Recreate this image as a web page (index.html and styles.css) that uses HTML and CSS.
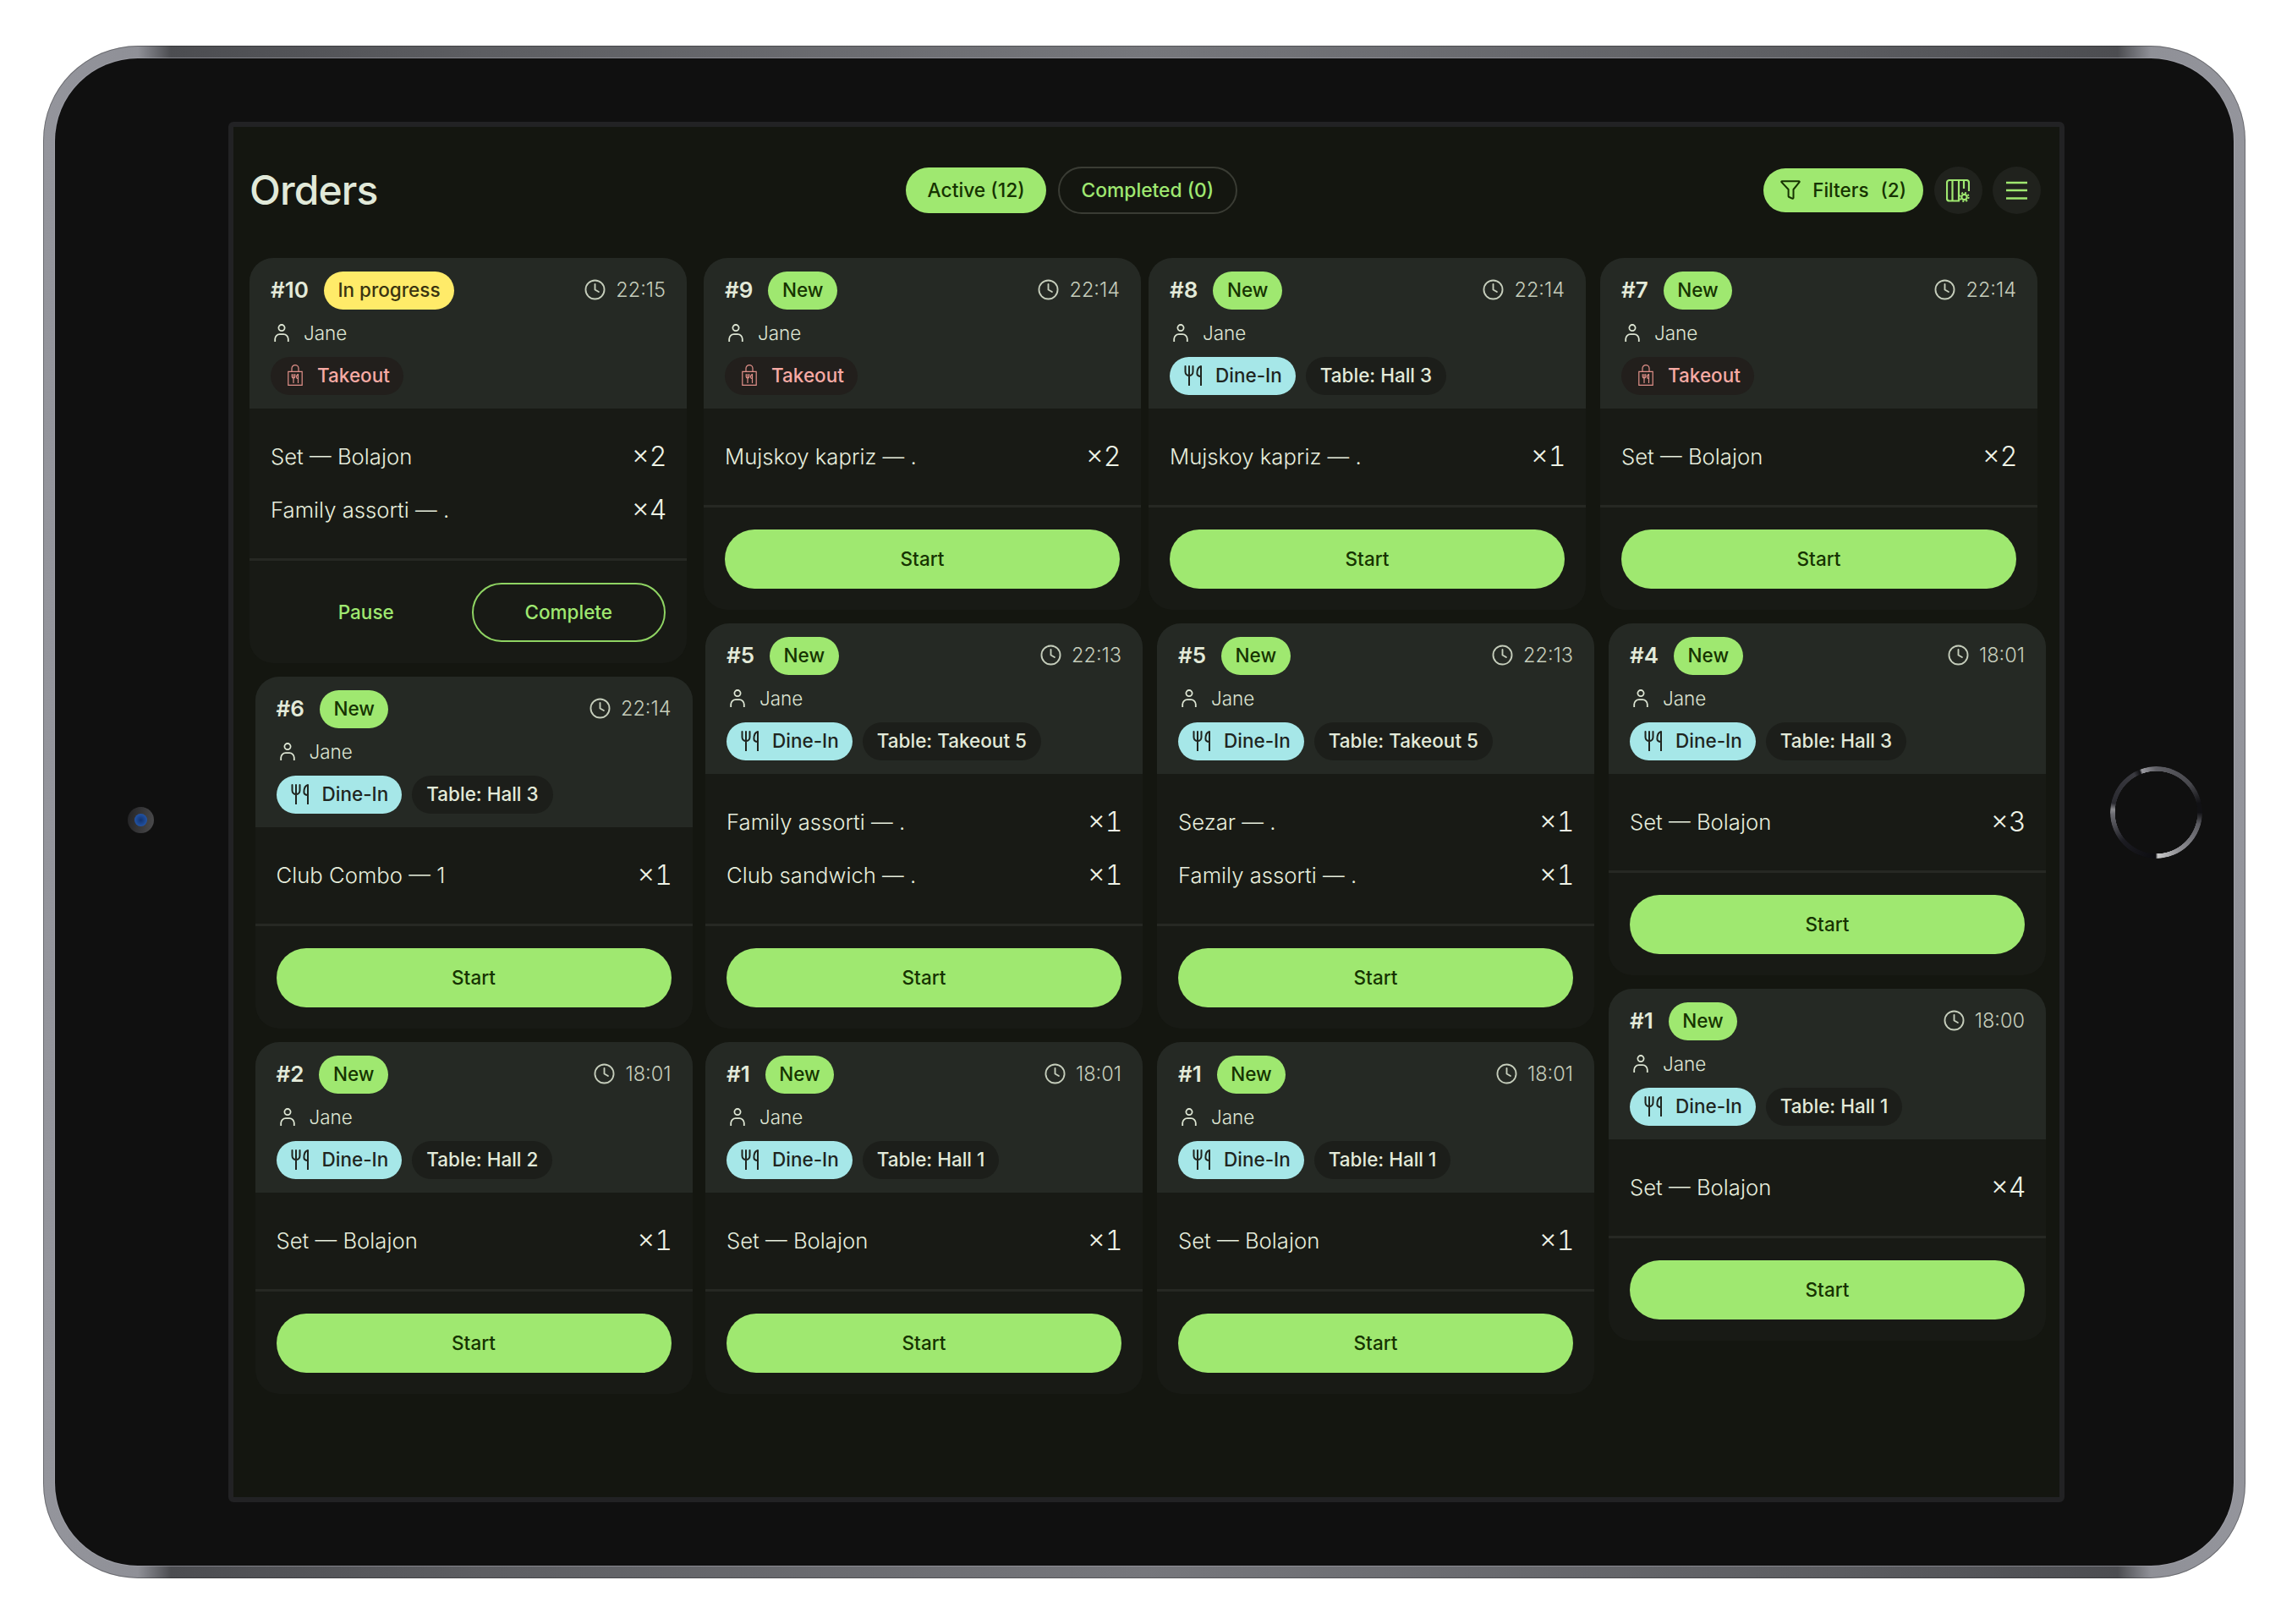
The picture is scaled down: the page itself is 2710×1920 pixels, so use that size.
FILE: index.html
```html
<!DOCTYPE html>
<html lang="en">
<head>
<meta charset="utf-8">
<title>Orders</title>
<link rel="stylesheet" href="styles.css">
</head>
<body>
<svg class="defs" width="0" height="0" aria-hidden="true">
  <symbol id="i-clock" viewBox="0 0 24 24"><circle cx="12" cy="12" r="10.6" fill="none" stroke="currentColor" stroke-width="1.8"/><path d="M12 5.8V12l4.2 2.4" fill="none" stroke="currentColor" stroke-width="1.8" stroke-linecap="round" stroke-linejoin="round"/></symbol>
  <symbol id="i-user" viewBox="0 0 18 21"><circle cx="9" cy="4.6" r="3.6" fill="none" stroke="currentColor" stroke-width="1.8"/><path d="M1.2 21v-3.2a5.6 5.6 0 0 1 5.6-5.6h4.4a5.6 5.6 0 0 1 5.6 5.6V21" fill="none" stroke="currentColor" stroke-width="1.8"/></symbol>
  <symbol id="i-dine" viewBox="0 0 22 24"><path d="M1.500 1v6.500a4.500 4.500 0 0 0 9 0V1M6 1v22.500M20 23.500V1c-3 .8-4.600 4.600-4.600 8.600 0 2.400 1.600 3.400 4.600 3.400" fill="none" stroke="currentColor" stroke-width="2" stroke-linecap="round" stroke-linejoin="round"/></symbol>
  <symbol id="i-bag" viewBox="0 0 18 25"><path d="M.8 8.300h16.400v16H.8zM5 8.300V4.600a4 4 0 0 1 8 0v3.700" fill="none" stroke="currentColor" stroke-width="1.200"/><path d="M5.200 11.500v2.800a1.800 1.800 0 0 0 3.600 0v-2.800M7 11.500v10M12.500 21.500v-10c-1.400.4-2 2-2 3.600 0 1 .7 1.500 2 1.500" fill="none" stroke="currentColor" stroke-width="1.200" stroke-linecap="round"/></symbol>
  <symbol id="i-funnel" viewBox="0 0 24 23"><path d="M2 1.200h20a.7.700 0 0 1 .5 1.200L15.500 11v9.700c0 .8-.8 1.300-1.500 1l-3.500-1.700a1 1 0 0 1-.9-.9V11L1.500 2.400A.7.700 0 0 1 2 1.200z" fill="none" stroke="currentColor" stroke-width="2" stroke-linejoin="round"/></symbol>
  <symbol id="i-cols" viewBox="0 0 28 27"><path d="M16 25.500H4a3 3 0 0 1-3-3V4a3 3 0 0 1 3-3h20a3 3 0 0 1 3 3v10" fill="none" stroke="currentColor" stroke-width="2.200"/><path d="M7.500 1v24.500M15 1v24.500M21 1v10" fill="none" stroke="currentColor" stroke-width="2.200"/><circle cx="21.500" cy="21" r="3.200" fill="none" stroke="currentColor" stroke-width="2.200"/><circle cx="21.500" cy="21" r="5.200" fill="none" stroke="currentColor" stroke-width="1.800" stroke-dasharray="2.100 1.970"/></symbol>
  <symbol id="i-menu" viewBox="0 0 25 22"><path d="M0 2h25M0 11h25M0 20.500h25" fill="none" stroke="currentColor" stroke-width="2.600"/></symbol>
</svg>

<div class="device">
  <span class="camera"><span class="lens"></span></span>
  <span class="home"></span>
  <div class="bezel">
    <main class="screen">
      <header class="topbar">
        <h1 class="title">Orders</h1>
        <nav class="tabs">
          <span class="tab tab-on">Active (12)</span>
          <span class="tab tab-off">Completed (0)</span>
        </nav>
        <div class="tools">
          <span class="filters"><svg class="ic-funnel"><use href="#i-funnel"/></svg><span>Filters</span><span>(2)</span></span>
          <span class="round"><svg class="ic-cols"><use href="#i-cols"/></svg></span>
          <span class="round"><svg class="ic-menu"><use href="#i-menu"/></svg></span>
        </div>
      </header>

      <section class="board">
        <div class="col col-a">
          <article class="card">
            <div class="head">
              <div class="line1"><b class="num">#10</b><span class="pill st-prog">In progress</span><span class="time"><svg class="ic-clock"><use href="#i-clock"/></svg>22:15</span></div>
              <div class="who"><svg class="ic-user"><use href="#i-user"/></svg>Jane</div>
              <div class="tags"><span class="pill tk"><svg class="ic-bag"><use href="#i-bag"/></svg>Takeout</span></div>
            </div>
            <ul class="items">
              <li><span>Set — Bolajon</span><span class="qty">×2</span></li>
              <li><span>Family assorti — .</span><span class="qty">×4</span></li>
            </ul>
            <div class="foot two"><span class="btn ghost">Pause</span><span class="btn outline">Complete</span></div>
          </article>
          <article class="card lower">
            <div class="head">
              <div class="line1"><b class="num">#6</b><span class="pill st-new">New</span><span class="time"><svg class="ic-clock"><use href="#i-clock"/></svg>22:14</span></div>
              <div class="who"><svg class="ic-user"><use href="#i-user"/></svg>Jane</div>
              <div class="tags"><span class="pill dine"><svg class="ic-dine"><use href="#i-dine"/></svg>Dine-In</span><span class="pill tbl">Table: Hall 3</span></div>
            </div>
            <ul class="items"><li><span>Club Combo — 1</span><span class="qty">×1</span></li></ul>
            <div class="foot"><span class="btn solid">Start</span></div>
          </article>
          <article class="card lower">
            <div class="head">
              <div class="line1"><b class="num">#2</b><span class="pill st-new">New</span><span class="time"><svg class="ic-clock"><use href="#i-clock"/></svg>18:01</span></div>
              <div class="who"><svg class="ic-user"><use href="#i-user"/></svg>Jane</div>
              <div class="tags"><span class="pill dine"><svg class="ic-dine"><use href="#i-dine"/></svg>Dine-In</span><span class="pill tbl">Table: Hall 2</span></div>
            </div>
            <ul class="items"><li><span>Set — Bolajon</span><span class="qty">×1</span></li></ul>
            <div class="foot"><span class="btn solid">Start</span></div>
          </article>
        </div>

        <div class="col col-b">
          <article class="card">
            <div class="head">
              <div class="line1"><b class="num">#9</b><span class="pill st-new">New</span><span class="time"><svg class="ic-clock"><use href="#i-clock"/></svg>22:14</span></div>
              <div class="who"><svg class="ic-user"><use href="#i-user"/></svg>Jane</div>
              <div class="tags"><span class="pill tk"><svg class="ic-bag"><use href="#i-bag"/></svg>Takeout</span></div>
            </div>
            <ul class="items"><li><span>Mujskoy kapriz — .</span><span class="qty">×2</span></li></ul>
            <div class="foot"><span class="btn solid">Start</span></div>
          </article>
          <article class="card lower">
            <div class="head">
              <div class="line1"><b class="num">#5</b><span class="pill st-new">New</span><span class="time"><svg class="ic-clock"><use href="#i-clock"/></svg>22:13</span></div>
              <div class="who"><svg class="ic-user"><use href="#i-user"/></svg>Jane</div>
              <div class="tags"><span class="pill dine"><svg class="ic-dine"><use href="#i-dine"/></svg>Dine-In</span><span class="pill tbl">Table: Takeout 5</span></div>
            </div>
            <ul class="items">
              <li><span>Family assorti — .</span><span class="qty">×1</span></li>
              <li><span>Club sandwich — .</span><span class="qty">×1</span></li>
            </ul>
            <div class="foot"><span class="btn solid">Start</span></div>
          </article>
          <article class="card lower">
            <div class="head">
              <div class="line1"><b class="num">#1</b><span class="pill st-new">New</span><span class="time"><svg class="ic-clock"><use href="#i-clock"/></svg>18:01</span></div>
              <div class="who"><svg class="ic-user"><use href="#i-user"/></svg>Jane</div>
              <div class="tags"><span class="pill dine"><svg class="ic-dine"><use href="#i-dine"/></svg>Dine-In</span><span class="pill tbl">Table: Hall 1</span></div>
            </div>
            <ul class="items"><li><span>Set — Bolajon</span><span class="qty">×1</span></li></ul>
            <div class="foot"><span class="btn solid">Start</span></div>
          </article>
        </div>

        <div class="col col-c">
          <article class="card">
            <div class="head">
              <div class="line1"><b class="num">#8</b><span class="pill st-new">New</span><span class="time"><svg class="ic-clock"><use href="#i-clock"/></svg>22:14</span></div>
              <div class="who"><svg class="ic-user"><use href="#i-user"/></svg>Jane</div>
              <div class="tags"><span class="pill dine"><svg class="ic-dine"><use href="#i-dine"/></svg>Dine-In</span><span class="pill tbl">Table: Hall 3</span></div>
            </div>
            <ul class="items"><li><span>Mujskoy kapriz — .</span><span class="qty">×1</span></li></ul>
            <div class="foot"><span class="btn solid">Start</span></div>
          </article>
          <article class="card lower">
            <div class="head">
              <div class="line1"><b class="num">#5</b><span class="pill st-new">New</span><span class="time"><svg class="ic-clock"><use href="#i-clock"/></svg>22:13</span></div>
              <div class="who"><svg class="ic-user"><use href="#i-user"/></svg>Jane</div>
              <div class="tags"><span class="pill dine"><svg class="ic-dine"><use href="#i-dine"/></svg>Dine-In</span><span class="pill tbl">Table: Takeout 5</span></div>
            </div>
            <ul class="items">
              <li><span>Sezar — .</span><span class="qty">×1</span></li>
              <li><span>Family assorti — .</span><span class="qty">×1</span></li>
            </ul>
            <div class="foot"><span class="btn solid">Start</span></div>
          </article>
          <article class="card lower">
            <div class="head">
              <div class="line1"><b class="num">#1</b><span class="pill st-new">New</span><span class="time"><svg class="ic-clock"><use href="#i-clock"/></svg>18:01</span></div>
              <div class="who"><svg class="ic-user"><use href="#i-user"/></svg>Jane</div>
              <div class="tags"><span class="pill dine"><svg class="ic-dine"><use href="#i-dine"/></svg>Dine-In</span><span class="pill tbl">Table: Hall 1</span></div>
            </div>
            <ul class="items"><li><span>Set — Bolajon</span><span class="qty">×1</span></li></ul>
            <div class="foot"><span class="btn solid">Start</span></div>
          </article>
        </div>

        <div class="col col-d">
          <article class="card">
            <div class="head">
              <div class="line1"><b class="num">#7</b><span class="pill st-new">New</span><span class="time"><svg class="ic-clock"><use href="#i-clock"/></svg>22:14</span></div>
              <div class="who"><svg class="ic-user"><use href="#i-user"/></svg>Jane</div>
              <div class="tags"><span class="pill tk"><svg class="ic-bag"><use href="#i-bag"/></svg>Takeout</span></div>
            </div>
            <ul class="items"><li><span>Set — Bolajon</span><span class="qty">×2</span></li></ul>
            <div class="foot"><span class="btn solid">Start</span></div>
          </article>
          <article class="card lower">
            <div class="head">
              <div class="line1"><b class="num">#4</b><span class="pill st-new">New</span><span class="time"><svg class="ic-clock"><use href="#i-clock"/></svg>18:01</span></div>
              <div class="who"><svg class="ic-user"><use href="#i-user"/></svg>Jane</div>
              <div class="tags"><span class="pill dine"><svg class="ic-dine"><use href="#i-dine"/></svg>Dine-In</span><span class="pill tbl">Table: Hall 3</span></div>
            </div>
            <ul class="items"><li><span>Set — Bolajon</span><span class="qty">×3</span></li></ul>
            <div class="foot"><span class="btn solid">Start</span></div>
          </article>
          <article class="card lower">
            <div class="head">
              <div class="line1"><b class="num">#1</b><span class="pill st-new">New</span><span class="time"><svg class="ic-clock"><use href="#i-clock"/></svg>18:00</span></div>
              <div class="who"><svg class="ic-user"><use href="#i-user"/></svg>Jane</div>
              <div class="tags"><span class="pill dine"><svg class="ic-dine"><use href="#i-dine"/></svg>Dine-In</span><span class="pill tbl">Table: Hall 1</span></div>
            </div>
            <ul class="items"><li><span>Set — Bolajon</span><span class="qty">×4</span></li></ul>
            <div class="foot"><span class="btn solid">Start</span></div>
          </article>
        </div>
      </section>
    </main>
  </div>
</div>
</body>
</html>
```

FILE: styles.css
```css
* { box-sizing: border-box; }
html, body { margin: 0; padding: 0; }
body {
  width: 2710px;
  height: 1920px;
  background: #fff;
  padding: 54px 55px 54px 51px;
  font-family: Inter, "Liberation Sans", sans-serif;
  overflow: hidden;
}
.defs { position: absolute; }

/* tablet hardware */
.device {
  position: relative;
  height: 1812px;
  padding: 15px 14px 15px 14px;
  border-radius: 112px;
  background: linear-gradient(90deg, #94959c 0, #8f9097 4.3%, #4c4d51 5.8%, #5d5e62 20%, #76777c 50%, #5d5e62 80%, #4c4d51 94.2%, #8f9097 95.7%, #94959c 100%);
  box-shadow: inset 0 0 0 1px rgba(0,0,0,.28);
}
.bezel {
  height: 100%;
  border-radius: 98px;
  background: #101010;
  box-shadow: 0 0 0 1px rgba(170,170,178,.55);
  padding: 75px 200px 75px 205px;
}
.camera {
  position: absolute;
  left: 100px;
  top: 900px;
  width: 31px;
  height: 31px;
  border-radius: 50%;
  background: linear-gradient(100deg, #222224, #4c4c4e);
  display: flex;
  align-items: center;
  justify-content: center;
}
.lens {
  width: 15px;
  height: 15px;
  border-radius: 50%;
  background: radial-gradient(circle, #12326e 0, #2458ac 80%);
}
.home {
  position: absolute;
  left: 2444px;
  top: 852px;
  width: 109px;
  height: 109px;
  border-radius: 50%;
  background: conic-gradient(from 0deg,
    #5e5e64 0deg, #47474c 50deg, #111114 78deg, #111114 90deg, #5a5a60 105deg, #8f8f94 150deg, #c8c8c8 178deg,
    #0c0c10 181deg, #1c1c22 230deg, #6c6c72 268deg, #8a8a8e 274deg, #2a2a30 282deg, #3a3a40 330deg, #111114 338deg, #9a9aa0 341deg, #5e5e64 360deg);
  -webkit-mask: radial-gradient(circle, transparent 48.5px, #000 49px);
  mask: radial-gradient(circle, transparent 48.5px, #000 49px);
}

/* app */
.screen {
  height: 100%;
  border: 6px solid #222224;
  border-radius: 6px;
  background: #141610;
  padding: 0 22px 0 19px;
}
.topbar {
  height: 150px;
  margin-bottom: 5px;
  display: grid;
  grid-template-columns: 775px auto 1fr;
  align-items: center;
}
.title {
  margin: 0;
  font-size: 48px;
  line-height: 56px;
  font-weight: 500;
  letter-spacing: -.9px;
  color: #e1e9d9;
}
.tabs { display: flex; align-items: center; gap: 14px; margin-left: 1px; }
.tab {
  display: flex;
  align-items: center;
  border-radius: 28px;
  font-size: 22.8px;
  font-weight: 500;
}
.tab-on { height: 54px; padding: 0 25.5px 1px; background: #9fe870; color: #163300; }
.tab-off { height: 56px; padding: 0 25.5px 1px; border: 2px solid #3a3c34; color: #9fe870; }
.tools { display: flex; align-items: center; justify-content: flex-end; gap: 12.5px; }
.filters {
  height: 52px;
  padding: 0 20px 1px;
  border-radius: 26px;
  background: #9fe870;
  color: #163300;
  display: flex;
  align-items: center;
  gap: 14px;
  font-size: 22.5px;
  font-weight: 500;
}
.ic-funnel { width: 24px; height: 23px; }
.round {
  width: 57px;
  height: 56px;
  border-radius: 50%;
  background: #20221d;
  color: #9fe870;
  display: flex;
  align-items: center;
  justify-content: center;
}
.ic-cols { width: 28px; height: 27px; }
.ic-menu { width: 25px; height: 22px; }

/* board */
.board {
  display: grid;
  grid-template-columns: 537px 526px 534px 527px;
  align-items: start;
}
.col { display: flex; flex-direction: column; gap: 16px; }
.col-a .lower { margin-left: 6.5px; }
.col-b .lower { margin-left: 2px; }
.col-c .lower { margin-left: 10px; }
.col-d .lower { margin-left: 10px; }

.card {
  width: 517px;
  border-radius: 28px;
  overflow: hidden;
  background: #181a15;
}
.head {
  height: 178px;
  padding: 16px 25px;
  background: #252924;
  display: flex;
  flex-direction: column;
  gap: 14px;
}
.line1 { display: flex; align-items: center; height: 45px; flex: none; }
.num { font-size: 26px; font-weight: 600; color: #e3ead9; margin-right: 18px; padding-bottom: 2px; }
.pill {
  display: inline-flex;
  align-items: center;
  height: 45px;
  padding: 0 16.5px 2px;
  border-radius: 22.5px;
  font-size: 22.5px;
  font-weight: 500;
  flex: none;
}
.st-new { background: #9fe870; color: #163300; }
.st-prog { background: #ffeb69; color: #3a3410; }
.time {
  margin-left: auto;
  display: flex;
  align-items: center;
  gap: 12px;
  padding-bottom: 2px;
  font-size: 23.5px;
  font-weight: 300;
  color: #c5cdbb;
}
.ic-clock { width: 25px; height: 25px; }
.who {
  height: 28px;
  flex: none;
  display: flex;
  align-items: center;
  gap: 17px;
  padding: 0 0 2px 4px;
  font-size: 22.5px;
  font-weight: 300;
  color: #dde5d3;
}
.ic-user { width: 18px; height: 21px; }
.tags { display: flex; gap: 12px; height: 45px; flex: none; }
.dine { background: #a6e7e8; color: #20251f; gap: 15px; padding: 0 16px 2px 17px; }
.ic-dine { width: 22px; height: 24px; }
.tbl { background: #1c1e1a; color: #e3ead9; padding: 0 17px 2px; }
.tk { background: #221f1c; color: #f7aaa4; gap: 17px; padding: 0 16px 2px 20px; }
.ic-bag { width: 18px; height: 25px; color: #e2918a; }

.items {
  list-style: none;
  margin: 0;
  padding: 37px 25px;
  border-bottom: 3px solid #262823;
  display: flex;
  flex-direction: column;
  gap: 23px;
}
.items li {
  height: 40px;
  display: flex;
  align-items: center;
  justify-content: space-between;
  padding-bottom: 2px;
  font-size: 25.7px;
  font-weight: 300;
  color: #e6edDC;
}
.qty {
  font-size: 32px;
  font-weight: 300;
  font-variant-numeric: tabular-nums;
  color: #eef3e6;
  margin-right: -1.5px;
}

.foot { padding: 26px 25px 25px; display: flex; }
.foot.two { gap: 12px; }
.btn {
  flex: 1;
  height: 70px;
  padding-bottom: 2px;
  border-radius: 35px;
  display: flex;
  align-items: center;
  justify-content: center;
  font-size: 22.5px;
  font-weight: 500;
}
.solid { background: #9fe870; color: #163300; }
.ghost { color: #9fe870; }
.outline { border: 2px solid #8fd463; color: #9fe870; }
```
